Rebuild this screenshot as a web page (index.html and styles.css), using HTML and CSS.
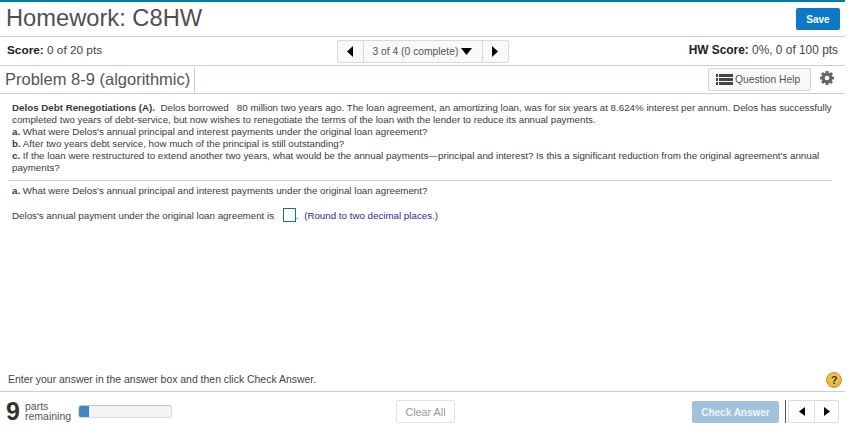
FILE: index.html
```html
<!DOCTYPE html>
<html lang="en">
<head>
<meta charset="utf-8">
<title>Homework: C8HW</title>
<link rel="stylesheet" href="styles.css">
</head>
<body>
<div class="app">
  <header class="title-row">
    <h1 class="title">Homework: C8HW</h1>
    <button class="save">Save</button>
  </header>
  <div class="score-row">
    <div class="score"><b>Score:</b> 0 of 20 pts</div>
    <div class="pager">
      <span class="pager-arrow"><svg width="6" height="11" viewBox="0 0 6 11"><path d="M6 0V11L0 5.5Z"/></svg></span>
      <span class="pager-mid">3 of 4 (0 complete)<svg class="caret" width="11" height="7" viewBox="0 0 11 7"><path d="M0 0H11L5.5 7Z"/></svg></span>
      <span class="pager-arrow"><svg width="6" height="11" viewBox="0 0 6 11"><path d="M0 0V11L6 5.5Z"/></svg></span>
    </div>
    <div class="hw-score"><b>HW Score:</b> 0%, 0 of 100 pts</div>
  </div>
  <div class="problem-row">
    <h2 class="problem">Problem 8-9 (algorithmic)</h2>
    <button class="help">
      <svg width="17" height="11" viewBox="0 0 17 11" fill="#444"><rect x="0" y="0" width="2" height="3"/><rect x="0" y="4" width="2" height="3"/><rect x="0" y="8" width="2" height="3"/><rect x="3" y="0" width="14" height="3"/><rect x="3" y="4" width="14" height="3"/><rect x="3" y="8" width="14" height="3"/></svg>
      Question Help
    </button>
    <svg class="gear" width="14" height="14" viewBox="0 0 24 24" fill="#666"><circle cx="12" cy="12" r="6.5" fill="none" stroke="#666" stroke-width="5.5"/><g><rect x="9.5" y="0" width="5" height="24"/><rect x="9.5" y="0" width="5" height="24" transform="rotate(45 12 12)"/><rect x="9.5" y="0" width="5" height="24" transform="rotate(90 12 12)"/><rect x="9.5" y="0" width="5" height="24" transform="rotate(135 12 12)"/></g><circle cx="12" cy="12" r="4" fill="#fff"/></svg>
  </div>
  <main class="content">
    <p class="item"><b>Delos Debt Renegotiations (A).</b>&nbsp; Delos borrowed &nbsp; 80 million two years ago. The loan agreement, an amortizing loan, was for six years at 8.624% interest per annum. Delos has successfully completed two years of debt-service, but now wishes to renegotiate the terms of the loan with the lender to reduce its annual payments.</p>
    <p class="item"><b>a.</b> What were Delos's annual principal and interest payments under the original loan agreement?</p>
    <p class="item"><b>b.</b> After two years debt service, how much of the principal is still outstanding?</p>
    <p class="item"><b>c.</b> If the loan were restructured to extend another two years, what would be the annual payments—principal and interest? Is this a significant reduction from the original agreement's annual payments?</p>
    <hr class="rule">
    <p class="question"><b>a.</b> What were Delos's annual principal and interest payments under the original loan agreement?</p>
    <p class="answer">Delos's annual payment under the original loan agreement is <span class="box"></span>. <span class="hint">(Round to two decimal places.)</span></p>
  </main>
  <div class="instruction">
    <span>Enter your answer in the answer box and then click Check Answer.</span>
    <span class="q-badge">?</span>
  </div>
  <footer class="footer">
    <div class="parts">
      <span class="parts-num">9</span>
      <span class="parts-label">parts<br>remaining</span>
      <span class="progress"><span class="progress-fill"></span></span>
    </div>
    <button class="clear">Clear All</button>
    <div class="actions">
      <button class="check">Check Answer</button>
      <div class="nav">
        <span class="nav-arrow"><svg width="6" height="9" viewBox="0 0 6 9"><path d="M6 0V9L0 4.5Z"/></svg></span>
        <span class="nav-arrow"><svg width="6" height="9" viewBox="0 0 6 9"><path d="M0 0V9L6 4.5Z"/></svg></span>
      </div>
    </div>
  </footer>
</div>
</body>
</html>
```
FILE: styles.css
```css
* { box-sizing: border-box; }
html, body { margin: 0; padding: 0; background: #fff; }
body { font-family: "Liberation Sans", Arial, sans-serif; color: #333; overflow: hidden; }
button { font-family: inherit; }
.app { width: 845px; height: 438px; display: flex; flex-direction: column; border-top: 2px solid #007fa3; }
.title-row { height: 35px; flex: none; display: flex; align-items: center; justify-content: space-between; padding: 0 5px 2px 6px; border-bottom: 1px solid #c6cfdd; }
.title { margin: 0; font-size: 23.7px; font-weight: 400; color: #505050; line-height: 30px; }
.save { width: 44px; height: 22px; margin-top: 2px; background: #0d77c9; color: #fff; border: 0; border-radius: 2px; font-size: 10px; font-weight: 700; padding: 0; }
.score-row { height: 29px; flex: none; display: grid; grid-template-columns: 1fr auto 1fr; align-items: center; padding: 0 7px; border-bottom: 1px solid #c6cfdd; font-size: 11.8px; line-height: 13px; color: #444; }
.score, .hw-score { padding-bottom: 2px; }
.score b, .hw-score b { color: #222; }
.hw-score { text-align: right; font-size: 11.9px; }
.pager { display: flex; height: 23px; border: 1px solid #d9d9d9; border-radius: 2px; background: #f9f9f9; }
.pager-arrow { width: 25px; display: flex; align-items: center; justify-content: center; fill: #000; }
.pager-mid { width: 120px; border-left: 1px solid #d9d9d9; border-right: 1px solid #d9d9d9; display: flex; align-items: center; padding-left: 9px; gap: 3px; font-size: 10.3px; color: #555; fill: #000; white-space: nowrap; }
.caret { flex: none; }
.problem-row { height: 28px; flex: none; display: flex; align-items: center; padding: 0 11px 0 5px; border-bottom: 1px solid #c6cfdd; }
.problem { margin: 0 auto 0 0; height: 26px; padding-right: 4px; border-right: 1px solid #c6cfdd; font-size: 16.5px; font-weight: 400; line-height: 25px; color: #555; }
.help { width: 103px; height: 23px; display: flex; align-items: center; gap: 2px; padding: 0 0 0 7px; margin-right: 9px; background: #f9f9f9; border: 1px solid #d5d5d5; border-radius: 2px; font-size: 10.3px; color: #555; }
.gear { margin-bottom: 4px; }
.content { flex: 1; padding: 8px 13px 0 12px; font-size: 9.75px; line-height: 12px; color: #3a3a3a; }
.item { margin: 0; }
.rule { margin: 6px 0 0 -4px; height: 1px; border: 0; background: #c6cfdd; }
.question { margin: 4px 0 0; }
.answer { margin: 11px 0 0; }
.box { display: inline-block; width: 13px; height: 14px; border: 1px solid #1d6f90; vertical-align: -3px; margin-left: 6px; }
.hint { color: #2a2a9a; margin-left: 3px; }
.instruction { height: 24px; flex: none; display: flex; align-items: center; justify-content: space-between; padding: 0 0 0 8px; border-bottom: 1px solid #c6cfdd; font-size: 10.45px; color: #444; }
.q-badge { width: 16px; height: 16px; margin-right: 3px; border: 1px solid #c9962a; border-radius: 50%; background: radial-gradient(circle at 50% 40%, #f8d266, #e2a21e); color: #333; font-size: 11px; font-weight: 700; line-height: 14px; text-align: center; }
.footer { flex: none; height: 46px; display: grid; grid-template-columns: 1fr auto 1fr; align-items: start; padding: 8px 6px 0 6px; }
.parts { display: flex; align-items: center; height: 23px; }
.parts-num { font-size: 25px; font-weight: 700; color: #333; width: 19px; line-height: 23px; }
.parts-label { font-size: 10.5px; line-height: 10px; color: #555; width: 53px; margin-top: -2px; }
.progress { width: 94px; height: 13px; border: 1px solid #ddd; border-top-color: #c4c4c4; border-radius: 3px; background: #f4f4f4; overflow: hidden; margin-top: -1px; }
.progress-fill { display: block; width: 10px; height: 100%; background: #3d87c8; }
.clear { width: 59px; height: 23px; margin-left: 6px; padding: 0; background: #fff; border: 1px solid #e2e2e2; border-radius: 2px; color: #999; font-size: 10.8px; }
.actions { display: flex; justify-content: flex-end; align-items: flex-start; }
.check { width: 87px; height: 22px; margin-top: 1px; padding: 0; background: #9fc3de; color: #f2f6fa; border: 0; border-radius: 2px; font-size: 10px; font-weight: 700; }
.nav { display: flex; height: 23px; margin-left: 6px; padding-left: 2px; border-left: 1px solid #555; }
.nav-arrow { width: 26px; display: flex; align-items: center; justify-content: center; border: 1px solid #dcdcdc; fill: #000; }
.nav-arrow:first-child { border-radius: 2px 0 0 2px; border-right: 0; }
.nav-arrow:last-child { width: 25px; border-radius: 0 2px 2px 0; }
```
